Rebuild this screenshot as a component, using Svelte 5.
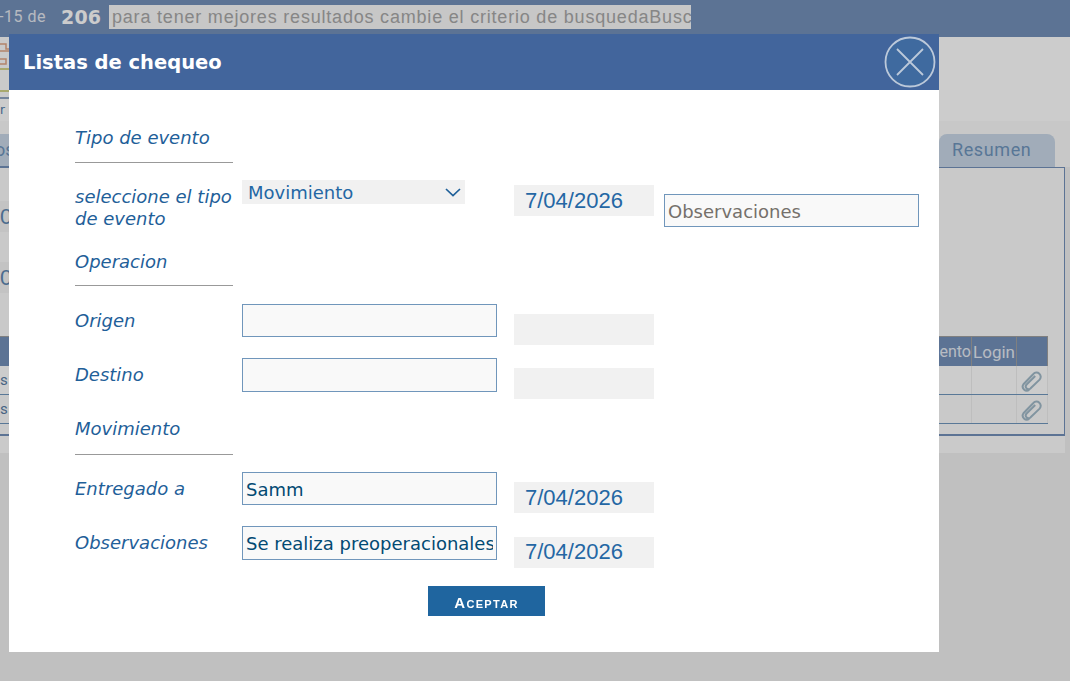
<script>
  const rows = ['s', 's'];
</script>

<div class="page">
  <header class="topbar">
    <span class="count">-15 de</span>
    <strong class="total">206</strong>
    <span class="search">para tener mejores resultados cambie el criterio de busquedaBusc</span>
  </header>

  <div class="brand">
    <svg class="logo" viewBox="0 0 9 60" width="9" height="60" aria-hidden="true">
      <path d="M0 7h6v5h3M0 14h9M0 22h6v5H0" fill="none" stroke="#e0a585" stroke-width="1.5" />
      <path d="M0 32h9" stroke="#d4d48a" stroke-width="2" />
      <path d="M0 54h9" stroke="#d4d48a" stroke-width="2" />
    </svg>
  </div>
  <div class="menu">r</div>

  <div class="tabs">
    <span class="tab left">os</span>
    <span class="tab resumen">Resumen</span>
  </div>

  <section class="panel">
    <div class="figures">
      <span>0</span>
      <span>0</span>
    </div>
    <table class="grid">
      <thead>
        <tr><th class="first"></th><th class="spacer"></th><th class="mov">ento</th><th class="login">Login</th><th class="clip"></th></tr>
      </thead>
      <tbody>
        {#each rows as r}
          <tr>
            <td class="first">{r}</td>
            <td class="spacer"></td>
            <td class="mov"></td>
            <td class="login"></td>
            <td class="clip">
              <svg viewBox="0 0 24 24" width="22" height="22" fill="none" stroke="#a2bac9" stroke-width="2.2" aria-hidden="true">
                <path d="M9 21.5a4.4 4.4 0 0 1-6.3-6L13.5 4.3a4.6 4.6 0 0 1 6.8 6.2L10.5 20a3 3 0 0 1-4.4-4.2L15.5 6.5" />
              </svg>
            </td>
          </tr>
        {/each}
      </tbody>
    </table>
  </section>
</div>

<div class="backdrop"></div>

<div class="modal" role="dialog">
  <div class="modal-head">
    <h1>Listas de chequeo</h1>
    <svg class="close" viewBox="0 0 52 52" width="52" height="52" aria-label="Cerrar">
      <circle cx="26" cy="26" r="24.5" fill="#3f6a9f" stroke="#bcc9da" stroke-width="1.8" />
      <path d="M13 13l26 26M39 13L13 39" stroke="#bcc9da" stroke-width="1.8" />
    </svg>
  </div>

  <div class="modal-body">
    <h2 class="section first-section">Tipo de evento</h2>

    <div class="row event">
      <label for="tipo">seleccione el tipo de evento</label>
      <div class="select" id="tipo">
        <span>Movimiento</span>
        <svg viewBox="0 0 16 9" width="16" height="9" aria-hidden="true">
          <path d="M1 1l7 6.5L15 1" fill="none" stroke="#1f6099" stroke-width="1.7" />
        </svg>
      </div>
      <div class="date date-top">7/04/2026</div>
      <input class="obs" value="Observaciones" readonly />
    </div>

    <h2 class="section op">Operacion</h2>

    <div class="row origin">
      <label for="origen">Origen</label>
      <input id="origen" readonly />
      <div class="date"></div>
    </div>
    <div class="row dest">
      <label for="destino">Destino</label>
      <input id="destino" readonly />
      <div class="date"></div>
    </div>

    <h2 class="section mov-title">Movimiento</h2>

    <div class="row delivered">
      <label for="entregado">Entregado a</label>
      <input id="entregado" value="Samm" readonly />
      <div class="date">7/04/2026</div>
    </div>
    <div class="row notes">
      <label for="observaciones">Observaciones</label>
      <input id="observaciones" value="Se realiza preoperacionales" readonly />
      <div class="date">7/04/2026</div>
    </div>

    <div class="actions">
      <button type="button"><span>Aceptar</span></button>
    </div>
  </div>
</div>

<style>
  :global(body) {
    margin: 0;
    background: #f0f0f0;
    overflow: hidden;
  }

  .page {
    height: 681px;
    font-family: "DejaVu Sans", sans-serif;
    background: linear-gradient(#fff 121px, transparent 121px);
  }

  .topbar {
    height: 37px;
    background: #7490ba;
    display: flex;
    align-items: flex-start;
    overflow: hidden;
    white-space: nowrap;
    box-sizing: border-box;
    padding-top: 5px;
  }
  .count {
    margin-left: -1px;
    width: 62px;
    font: 16px/24px Roboto, sans-serif;
    letter-spacing: 0.5px;
    color: #e4e8f0;
  }
  .total {
    width: 48px;
    font: 700 19px/24px "DejaVu Sans", sans-serif;
    color: #fff;
    letter-spacing: 0.2px;
  }
  .search {
    height: 24px;
    width: 582px;
    box-sizing: border-box;
    padding-left: 3px;
    background: #f9f9f9;
    color: #a8a8a8;
    font: 18px/24px "Liberation Sans", sans-serif;
    letter-spacing: 0.8px;
    overflow: hidden;
  }

  .brand {
    width: 20px;
    height: 60px;
    background: #fdfdfd;
  }
  .logo {
    display: block;
  }
  .menu {
    width: 20px;
    height: 24px;
    background: #fff;
    border-top: 2px solid #93a7c4;
    box-sizing: border-box;
    color: #4f7ba8;
    font-size: 12px;
    line-height: 22px;
  }

  .tabs {
    height: 46px;
    display: flex;
    justify-content: space-between;
    align-items: flex-end;
    background: #fbfbfb;
    padding-right: 15px;
  }
  .tab {
    height: 33px;
    background: #cad8e8;
    color: #6f94bc;
    font: 18px/31px Roboto, sans-serif;
    border-radius: 8px 8px 0 0;
    box-sizing: border-box;
  }
  .tab.left {
    width: 20px;
    text-indent: -5px;
    border-bottom: 1px solid #7490ba;
    border-radius: 0;
    overflow: hidden;
  }
  .tab.resumen {
    width: 116px;
    padding-left: 13px;
    letter-spacing: 0.6px;
  }

  .panel {
    height: 269px;
    margin-right: 5px;
    box-sizing: border-box;
    background: #fcfcfc;
    border: 1px solid #7490ba;
    border-left: 0;
    border-bottom-width: 2px;
    box-shadow: 0 17px 0 #fdfdfd;
    padding-top: 168px;
    position: relative;
  }
  .figures {
    position: absolute;
    left: 0;
    top: 33px;
    width: 9px;
    overflow: hidden;
    color: #5f88b2;
    font: 22px/31px "Liberation Sans", sans-serif;
  }
  .figures span {
    display: block;
    height: 31px;
    background: #f4f4f4;
  }
  .figures span + span {
    margin-top: 30px;
  }

  .grid {
    width: 1048px;
    table-layout: fixed;
    border-collapse: collapse;
    font: 16px Roboto, sans-serif;
  }
  .grid th {
    height: 29px;
    padding: 0;
    background: #7490ba;
    color: #e6ebf3;
    font-weight: 400;
    border-right: 1px solid #a0a0a0;
    border-top: 1px solid #a0a0a0;
    text-align: right;
  }
  .grid td {
    height: 28px;
    padding: 0;
    border-bottom: 1px solid #7097bd;
    border-right: 1px solid #eee;
    color: #5a7da6;
    font-size: 15px;
  }
  .grid tr:first-child td {
    background: #fff;
  }
  .grid .first {
    width: 9px;
  }
  .grid .mov {
    width: 40px;
  }
  .grid .login {
    width: 44px;
    text-align: center;
    font-size: 17px;
  }
  .grid .clip {
    width: 30px;
    text-align: center;
  }
  .grid .clip svg {
    display: block;
    margin: 2px auto 0;
  }

  .backdrop {
    position: fixed;
    inset: 0;
    background: rgba(0, 0, 0, 0.2);
  }

  .modal {
    position: absolute;
    left: 9px;
    top: 34px;
    width: 930px;
    height: 618px;
    background: #fff;
    font-family: "DejaVu Sans", sans-serif;
  }
  .modal-head {
    height: 56px;
    background: #42659c;
    display: flex;
    align-items: center;
    justify-content: space-between;
    padding: 0 3px 0 14px;
  }
  .modal-head h1 {
    margin: 0;
    color: #fff;
    font-size: 19.5px;
    font-weight: 700;
  }
  .close {
    display: block;
  }

  .modal-body {
    padding-left: 66px;
  }
  .section {
    width: 158px;
    height: 35px;
    margin: 0;
    box-sizing: border-box;
    border-bottom: 1px solid #999;
    color: #1f6099;
    font-size: 18px;
    font-style: italic;
    font-weight: 400;
    line-height: 21px;
  }
  .first-section {
    margin-top: 38px;
  }
  .first-section {
    line-height: 20px;
  }
  .op {
    margin-top: 7px;
  }
  .mov-title {
    height: 37px;
    margin-top: 26px;
  }

  .row {
    display: grid;
    grid-template-columns: 167px 272px 150px 255px;
    align-items: start;
  }
  .row label {
    color: #1f6099;
    font-size: 18px;
    font-style: italic;
    line-height: 22px;
    padding-top: 6px;
    width: 160px;
  }
  .event label {
    padding-top: 6.5px;
  }
  .row input {
    width: 255px;
    height: 33px;
    box-sizing: border-box;
    margin: 0;
    padding: 1px 3px 0;
    background: #f9f9f9;
    border: 1px solid #7096bb;
    border-radius: 0;
    outline: none;
    color: #024a73;
    font: 18px "DejaVu Sans", sans-serif;
  }
  .date {
    width: 140px;
    height: 31px;
    margin-top: 10px;
    box-sizing: border-box;
    padding-left: 11px;
    background: #f1f1f1;
    color: #2467a4;
    font: 22px/31px "Liberation Sans", sans-serif;
  }
  .event {
    margin-top: 16px;
    height: 65px;
  }
  .select {
    width: 223px;
    height: 24px;
    margin-top: 1px;
    box-sizing: border-box;
    padding: 0 4px 0 6px;
    display: flex;
    align-items: center;
    justify-content: space-between;
    background: #f1f1f1;
    color: #2467a4;
    font-size: 18px;
  }
  .date-top {
    margin-top: 6px;
  }
  .row .obs {
    margin-top: 15px;
    color: #75706b;
  }
  .origin {
    margin-top: 18px;
    height: 54px;
  }
  .dest {
    height: 34px;
  }
  .dest input {
    height: 34px;
  }
  .delivered {
    margin-top: 17px;
    height: 54px;
  }
  .notes {
    height: 34px;
  }
  .notes input {
    height: 34px;
  }
  .notes .date {
    margin-top: 11px;
    line-height: 29px;
  }

  .actions {
    margin-top: 26px;
    padding-left: 353px;
  }
  .actions button {
    display: block;
    width: 117px;
    height: 30px;
    padding: 3px 0 0;
    border: 0;
    background: #1f659f;
    color: #fff;
    font: 700 15px "Liberation Sans", sans-serif;
    font-variant: small-caps;
    letter-spacing: 1.3px;
  }
  .actions button span {
    display: block;
    filter: blur(0.5px);
  }
</style>
